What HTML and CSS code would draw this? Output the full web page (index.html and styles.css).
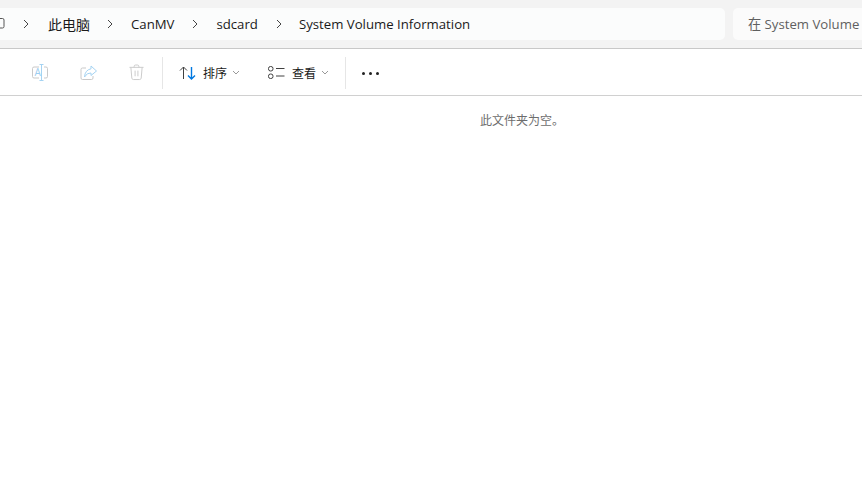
FILE: index.html
```html
<!DOCTYPE html>
<html lang="zh-CN">
<head>
<meta charset="utf-8">
<title>System Volume Information</title>
<link rel="stylesheet" href="styles.css">
</head>
<body>
<header class="topbar">
  <nav class="address">
    <svg class="clip-icon" width="5" height="14" viewBox="0 0 5 14"><path d="M0 1.500H2.500Q4 1.500 4 3V9.500Q4 11 2.500 11H0" fill="none" stroke="#555" stroke-width="1"/></svg>
    <svg class="sep" width="6" height="10" viewBox="0 0 6 10"><path d="M1 1L5 5L1 9" fill="none" stroke="#444" stroke-width="1"/></svg>
    <span class="crumb crumb-first">此电脑</span>
    <svg class="sep" width="6" height="10" viewBox="0 0 6 10"><path d="M1 1L5 5L1 9" fill="none" stroke="#444" stroke-width="1"/></svg>
    <span class="crumb">CanMV</span>
    <svg class="sep" width="6" height="10" viewBox="0 0 6 10"><path d="M1 1L5 5L1 9" fill="none" stroke="#444" stroke-width="1"/></svg>
    <span class="crumb">sdcard</span>
    <svg class="sep" width="6" height="10" viewBox="0 0 6 10"><path d="M1 1L5 5L1 9" fill="none" stroke="#444" stroke-width="1"/></svg>
    <span class="crumb crumb-last">System Volume Information</span>
  </nav>
  <div class="search">在 System Volume</div>
</header>
<div class="toolbar">
  <div class="group-disabled">
    <svg class="tool" width="18" height="17" viewBox="0 0 18 17"><path d="M8 3H3Q1.500 3 1.500 4.500V12.500Q1.500 14 3 14H8M13 3H15Q16.500 3 16.500 4.500V12.500Q16.500 14 15 14H13" fill="none" stroke="#c9c9c9"/><path d="M8.500 0.500H12.500M8.500 16.500H12.500M10.500 0.500V16.500" fill="none" stroke="#a5d3f2"/><text x="3.500" y="12" class="glyph-a">A</text></svg>
    <svg class="tool" width="18" height="16" viewBox="0 0 18 16"><path d="M6 3H2.500Q1 3 1 4.500V13Q1 14.500 2.500 14.500H11.500Q13 14.500 13 13V11" fill="none" stroke="#c9c9c9"/><path d="M11 1L16.500 6L11 10.500V8Q7 7.500 4.500 12Q5 5 11 3.800Z" fill="none" stroke="#a5d3f2"/></svg>
    <svg class="tool" width="15" height="17" viewBox="0 0 16 17"><path d="M0.500 3H15.500M5.500 3V2Q5.500 0.500 7 0.500H9Q10.500 0.500 10.500 2V3M2 3L3 14.500Q3.200 16 4.800 16H11.200Q12.800 16 13 14.500L14 3M6.500 6.500V12.500M9.500 6.500V12.500" fill="none" stroke="#c9c9c9"/></svg>
  </div>
  <span class="divider"></span>
  <div class="action action-sort">
    <svg width="17" height="14" viewBox="0 0 17 14"><path d="M1 4.500L4.500 1L8 4.500M4.500 1V13" fill="none" stroke="#404040"/><path d="M9 9.500L12.500 13L16 9.500M12.500 1V13" fill="none" stroke="#0078e0" stroke-width="1.400"/></svg>
    <span>排序</span>
    <svg class="caret" width="8" height="5" viewBox="0 0 8 5"><path d="M1 1L4 4L7 1" fill="none" stroke="#999"/></svg>
  </div>
  <div class="action action-view">
    <svg width="17" height="13" viewBox="0 0 17 13"><rect x="0.500" y="0.500" width="4.500" height="4.500" rx="2" fill="none" stroke="#404040"/><rect x="0.500" y="8" width="4.500" height="4.500" rx="2" fill="none" stroke="#404040"/><path d="M8 2.500H16.500M8 10H16.500" fill="none" stroke="#404040"/></svg>
    <span>查看</span>
    <svg class="caret" width="8" height="5" viewBox="0 0 8 5"><path d="M1 1L4 4L7 1" fill="none" stroke="#999"/></svg>
  </div>
  <span class="divider"></span>
  <svg class="more" width="17" height="3" viewBox="0 0 17 3"><circle cx="1.500" cy="1.500" r="1.500" fill="#222"/><circle cx="8.500" cy="1.500" r="1.500" fill="#222"/><circle cx="15.500" cy="1.500" r="1.500" fill="#222"/></svg>
</div>
<main class="content">
  <p class="empty">此文件夹为空。</p>
</main>
</body>
</html>
```
FILE: styles.css
```css
* { box-sizing: border-box; }
html, body { margin: 0; height: 100%; overflow: hidden; background: #fff; }
body { font-family: "Open Sans", "Noto Sans CJK SC", sans-serif; font-size: 13.2px; color: #1a1a1a; }

.topbar { display: flex; gap: 8px; height: 49px; padding: 8px 0; background: #f3f3f3; border-bottom: 1px solid #c8c8c8; }
.address { flex: 0 0 725px; display: flex; align-items: center; height: 32px; background: #fbfcfc; border-radius: 0 5px 5px 0; }
.clip-icon { flex: none; margin-right: 18px; }
.sep { flex: none; }
.crumb { margin: 0 18px; white-space: nowrap; }
.crumb-first { margin: 0 17px 0 19px; font-size: 14px; }
.crumb-last { margin-left: 17px; }
.search { flex: 1; min-width: 0; height: 32px; line-height: 32px; padding-left: 15px; background: #fbfbfb; border-radius: 5px 0 0 5px; color: #5f5f5f; white-space: nowrap; }

.toolbar { display: flex; align-items: center; height: 47px; padding-top: 1px; border-bottom: 1px solid #d0d0d0; background: #fff; }
.group-disabled { display: flex; align-items: center; gap: 31px; padding-left: 31px; width: 162px; }
.tool { flex: none; }
.glyph-a { font-size: 10px; fill: #9ccdf0; font-family: "Open Sans", sans-serif; }
.divider { flex: none; width: 1px; height: 32px; background: #e6e6e6; }
.action { display: flex; align-items: center; gap: 7px; font-size: 12px; color: #1a1a1a; white-space: nowrap; }
.caret { margin-left: -2px; }
.action-sort { margin-left: 16px; width: 89px; }
.action-view { width: 77px; }
.more { margin: 1px 0 0 16px; }

.content { display: flex; justify-content: center; padding-left: 182px; }
.empty { margin: 16px 0 0; font-size: 12px; line-height: 18px; color: #6d6d6d; }
```
